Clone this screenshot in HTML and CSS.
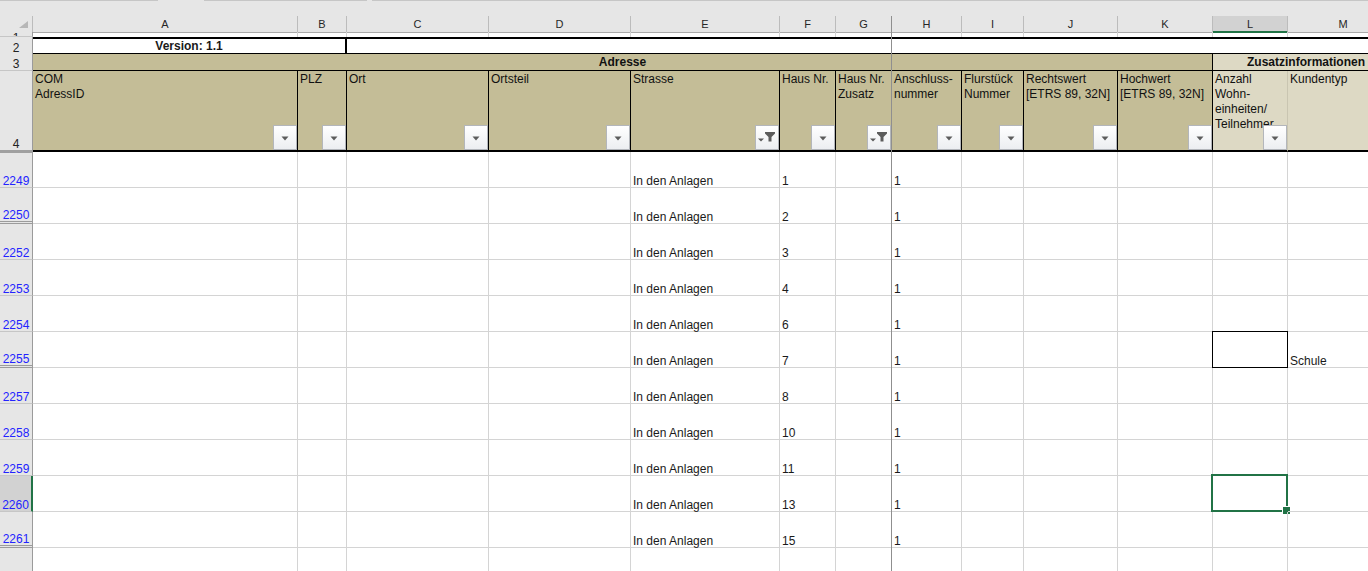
FILE: index.html
```html
<!DOCTYPE html>
<html lang="de">
<head>
  <meta charset="UTF-8">
  <title>Adressliste</title>
  <link rel="stylesheet" href="styles.css">
</head>
<body>
  <div class="sheet">
    <div class="topbar">
      <span class="seg s1"></span><span class="seg gap1"></span><span class="seg s2"></span><span class="seg gap2"></span><span class="seg s3"></span>
    </div>

    <div class="row colhead">
      <div class="corner"><svg width="9" height="7" viewBox="0 0 9 7"><polygon points="9,0 9,7 0,7" fill="#b7b7b7"/></svg></div>
      <div class="col">A</div><div class="col">B</div><div class="col">C</div><div class="col">D</div>
      <div class="col">E</div><div class="col">F</div><div class="col">G</div><div class="col">H</div>
      <div class="col">I</div><div class="col">J</div><div class="col">K</div><div class="col current">L</div>
      <div class="col">M</div>
    </div>

    <div class="row r1">
      <div class="rh">1</div>
      <div class="c"></div><div class="c"></div><div class="c"></div><div class="c"></div><div class="c"></div>
      <div class="c"></div><div class="c"></div><div class="c"></div><div class="c"></div><div class="c"></div>
      <div class="c"></div><div class="c"></div><div class="c"></div>
    </div>

    <div class="row r2">
      <div class="rh">2</div>
      <div class="c version">Version: 1.1</div>
      <div class="c rest"></div>
    </div>

    <div class="row r3">
      <div class="rh">3</div>
      <div class="c group">Adresse</div>
      <div class="c group extra">Zusatzinformationen</div>
    </div>

    <div class="row hdr">
      <div class="rh">4</div>
      <div class="h">COM<br>AdressID<span class="fbtn"><svg class="ico" viewBox="0 0 22 23"><path d="M7.5 10.5h7l-3.5 4z"/></svg></span></div>
      <div class="h">PLZ<span class="fbtn"><svg class="ico" viewBox="0 0 22 23"><path d="M7.5 10.5h7l-3.5 4z"/></svg></span></div>
      <div class="h">Ort<span class="fbtn"><svg class="ico" viewBox="0 0 22 23"><path d="M7.5 10.5h7l-3.5 4z"/></svg></span></div>
      <div class="h">Ortsteil<span class="fbtn"><svg class="ico" viewBox="0 0 22 23"><path d="M7.5 10.5h7l-3.5 4z"/></svg></span></div>
      <div class="h">Strasse<span class="fbtn"><svg class="ico" viewBox="0 0 22 23"><path d="M9 6h10v1.5l-3.5 3.5v4.5h-3v-4.5l-3.5-3.5z"/><path d="M2 12.5h6l-3 3z"/></svg></span></div>
      <div class="h">Haus Nr.<span class="fbtn"><svg class="ico" viewBox="0 0 22 23"><path d="M7.5 10.5h7l-3.5 4z"/></svg></span></div>
      <div class="h">Haus Nr.<br>Zusatz<span class="fbtn"><svg class="ico" viewBox="0 0 22 23"><path d="M9 6h10v1.5l-3.5 3.5v4.5h-3v-4.5l-3.5-3.5z"/><path d="M2 12.5h6l-3 3z"/></svg></span></div>
      <div class="h">Anschluss-<br>nummer<span class="fbtn"><svg class="ico" viewBox="0 0 22 23"><path d="M7.5 10.5h7l-3.5 4z"/></svg></span></div>
      <div class="h">Flurstück<br>Nummer<span class="fbtn"><svg class="ico" viewBox="0 0 22 23"><path d="M7.5 10.5h7l-3.5 4z"/></svg></span></div>
      <div class="h">Rechtswert<br>[ETRS 89, 32N]<span class="fbtn"><svg class="ico" viewBox="0 0 22 23"><path d="M7.5 10.5h7l-3.5 4z"/></svg></span></div>
      <div class="h">Hochwert<br>[ETRS 89, 32N]<span class="fbtn"><svg class="ico" viewBox="0 0 22 23"><path d="M7.5 10.5h7l-3.5 4z"/></svg></span></div>
      <div class="h light">Anzahl<br>Wohn-<br>einheiten/<br>Teilnehmer<span class="fbtn"><svg class="ico" viewBox="0 0 22 23"><path d="M7.5 10.5h7l-3.5 4z"/></svg></span></div>
      <div class="h light last">Kundentyp<span class="fbtn"><svg class="ico" viewBox="0 0 22 23"><path d="M7.5 10.5h7l-3.5 4z"/></svg></span></div>
    </div>

    <div class="row d first">
      <div class="rh">2249</div>
      <div class="c"></div><div class="c"></div><div class="c"></div><div class="c"></div>
      <div class="c">In den Anlagen</div><div class="c">1</div><div class="c"></div><div class="c">1</div>
      <div class="c"></div><div class="c"></div><div class="c"></div><div class="c"></div><div class="c"></div>
    </div>
    <div class="row d">
      <div class="rh gap">2250</div>
      <div class="c"></div><div class="c"></div><div class="c"></div><div class="c"></div>
      <div class="c">In den Anlagen</div><div class="c">2</div><div class="c"></div><div class="c">1</div>
      <div class="c"></div><div class="c"></div><div class="c"></div><div class="c"></div><div class="c"></div>
    </div>
    <div class="row d">
      <div class="rh">2252</div>
      <div class="c"></div><div class="c"></div><div class="c"></div><div class="c"></div>
      <div class="c">In den Anlagen</div><div class="c">3</div><div class="c"></div><div class="c">1</div>
      <div class="c"></div><div class="c"></div><div class="c"></div><div class="c"></div><div class="c"></div>
    </div>
    <div class="row d">
      <div class="rh">2253</div>
      <div class="c"></div><div class="c"></div><div class="c"></div><div class="c"></div>
      <div class="c">In den Anlagen</div><div class="c">4</div><div class="c"></div><div class="c">1</div>
      <div class="c"></div><div class="c"></div><div class="c"></div><div class="c"></div><div class="c"></div>
    </div>
    <div class="row d">
      <div class="rh">2254</div>
      <div class="c"></div><div class="c"></div><div class="c"></div><div class="c"></div>
      <div class="c">In den Anlagen</div><div class="c">6</div><div class="c"></div><div class="c">1</div>
      <div class="c"></div><div class="c"></div><div class="c"></div><div class="c"></div><div class="c"></div>
    </div>
    <div class="row d">
      <div class="rh gap">2255</div>
      <div class="c"></div><div class="c"></div><div class="c"></div><div class="c"></div>
      <div class="c">In den Anlagen</div><div class="c">7</div><div class="c"></div><div class="c">1</div>
      <div class="c"></div><div class="c"></div><div class="c"></div><div class="c boxed"></div><div class="c">Schule</div>
    </div>
    <div class="row d">
      <div class="rh">2257</div>
      <div class="c"></div><div class="c"></div><div class="c"></div><div class="c"></div>
      <div class="c">In den Anlagen</div><div class="c">8</div><div class="c"></div><div class="c">1</div>
      <div class="c"></div><div class="c"></div><div class="c"></div><div class="c"></div><div class="c"></div>
    </div>
    <div class="row d">
      <div class="rh">2258</div>
      <div class="c"></div><div class="c"></div><div class="c"></div><div class="c"></div>
      <div class="c">In den Anlagen</div><div class="c">10</div><div class="c"></div><div class="c">1</div>
      <div class="c"></div><div class="c"></div><div class="c"></div><div class="c"></div><div class="c"></div>
    </div>
    <div class="row d">
      <div class="rh">2259</div>
      <div class="c"></div><div class="c"></div><div class="c"></div><div class="c"></div>
      <div class="c">In den Anlagen</div><div class="c">11</div><div class="c"></div><div class="c">1</div>
      <div class="c"></div><div class="c"></div><div class="c"></div><div class="c"></div><div class="c"></div>
    </div>
    <div class="row d">
      <div class="rh active">2260</div>
      <div class="c"></div><div class="c"></div><div class="c"></div><div class="c"></div>
      <div class="c">In den Anlagen</div><div class="c">13</div><div class="c"></div><div class="c">1</div>
      <div class="c"></div><div class="c"></div><div class="c"></div><div class="c"><span class="selbox"></span></div><div class="c"></div>
    </div>
    <div class="row d">
      <div class="rh gap">2261</div>
      <div class="c"></div><div class="c"></div><div class="c"></div><div class="c"></div>
      <div class="c">In den Anlagen</div><div class="c">15</div><div class="c"></div><div class="c">1</div>
      <div class="c"></div><div class="c"></div><div class="c"></div><div class="c"></div><div class="c"></div>
    </div>
    <div class="row d">
      <div class="rh"></div>
      <div class="c"></div><div class="c"></div><div class="c"></div><div class="c"></div>
      <div class="c"></div><div class="c"></div><div class="c"></div><div class="c"></div>
      <div class="c"></div><div class="c"></div><div class="c"></div><div class="c"></div><div class="c"></div>
    </div>

    <div class="freeze"></div>
  </div>
</body>
</html>
```

FILE: styles.css
```css
* { box-sizing: border-box; }
html, body { height: 100%; }
body {
  margin: 0;
  overflow: hidden;
  background: #fff;
  font-family: "Liberation Sans", Arial, sans-serif;
  font-size: 12px;
  color: #1a1a1a;
}
.sheet { position: relative; width: 1399px; }

/* strip above the column letters */
.topbar { display: flex; height: 16px; background: #e6e6e6; }
.seg { height: 1px; }
.s1 { width: 158px; background: #c6c6c6; }
.gap1 { width: 46px; }
.s2 { width: 163px; background: #c6c6c6; }
.gap2 { width: 5px; }
.s3 { flex: 1; background: #c6c6c6; }

.row {
  display: grid;
  grid-template-columns: 33px 265px 49px 142px 142px 149px 56px 56px 70px 62px 94px 95px 75px 111px;
}

/* column letters */
.colhead { height: 16px; background: #e6e6e6; }
.corner {
  display: flex;
  justify-content: flex-end;
  align-items: flex-end;
  padding: 0 4px 4px 0;
  border-right: 1px solid #bcbcbc;
  border-bottom: 1px solid #ababab;
}
.col {
  border-right: 1px solid #bcbcbc;
  border-bottom: 1px solid #ababab;
  text-align: center;
  font-size: 11px;
  line-height: 14px;
  padding-top: 1px;
  color: #262626;
}
.col.current {
  background: #d2d2d2;
  border-bottom: 2px solid #217346;
}

/* row numbers */
.rh {
  display: flex;
  justify-content: center;
  align-items: flex-end;
  background: #e6e6e6;
  border-right: 1px solid #9b9b9b;
  border-bottom: 1px solid #c6c6c6;
  line-height: 12px;
  color: #222;
  overflow: hidden;
}
.rh.gap { border-bottom: 3px double #9b9b9b; }
.rh.active {
  background: #d2d2d2;
  border-right: 2px solid #217346;
}

/* row 1 */
.r1 { height: 5px; }
.r1 .rh { align-items: flex-start; }
.r1 .c { border-right: 1px solid #d4d4d4; }

/* row 2 */
.r2 { height: 17px; }
.r2 .c { border-top: 2px solid #000; border-bottom: 2px solid #000; }
.version {
  grid-column: span 2;
  border-right: 2px solid #000;
  font-weight: bold;
  text-align: center;
  line-height: 13px;
  padding-top: 1px;
}
.rest { grid-column: span 11; }

/* row 3 */
.r3 { height: 17px; }
.group {
  grid-column: span 11;
  background: #c4bd97;
  border-right: 1px solid #000;
  border-bottom: 1px solid #000;
  font-weight: bold;
  text-align: center;
  line-height: 16px;
  color: #111;
}
.group.extra {
  grid-column: span 2;
  background: #ddd9c4;
  border-right: none;
}

/* row 4, table headings */
.hdr { height: 81px; }
.hdr .rh { border-bottom: 2px solid #a0a0a0; }
.h {
  position: relative;
  overflow: hidden;
  background: #c4bd97;
  border-right: 1px solid #000;
  border-bottom: 2px solid #000;
  padding: 1px 2px 0;
  line-height: 15px;
  white-space: nowrap;
  color: #111;
}
.h.light { background: #ddd9c4; border-right-color: #c9c5b1; }
.h.last { border-right: none; }
.fbtn {
  position: absolute;
  right: 0;
  bottom: 0;
  width: 24px;
  height: 25px;
  display: flex;
  border: 1px solid #b3b6bb;
  background: linear-gradient(#ffffff, #eceef1);
}
.ico { width: 22px; height: 23px; fill: #5c5c5c; }

/* data rows */
.d { height: 36px; }
.d .rh { color: #2323ff; }
.d.first .rh { box-shadow: inset 0 1px 0 #a0a0a0; }
.d .c {
  position: relative;
  display: flex;
  align-items: flex-end;
  padding: 0 2px;
  border-right: 1px solid #d4d4d4;
  border-bottom: 1px solid #d4d4d4;
  line-height: 12px;
  white-space: nowrap;
}
.boxed::after {
  content: "";
  position: absolute;
  top: -1px;
  left: -1px;
  right: -1px;
  bottom: -1px;
  border: 1px solid #000;
}
.selbox {
  position: absolute;
  top: -2px;
  left: -2px;
  right: -1px;
  bottom: -1px;
  border: 2px solid #217346;
}
.selbox::after {
  content: "";
  position: absolute;
  right: -4px;
  bottom: -4px;
  width: 7px;
  height: 7px;
  background: #217346;
  border-left: 1px solid #fff;
  border-top: 1px solid #fff;
}

/* frozen pane divider */
.freeze {
  position: absolute;
  left: 891px;
  top: 16px;
  height: 600px;
  width: 1px;
  background: #8f8f8f;
}
```
